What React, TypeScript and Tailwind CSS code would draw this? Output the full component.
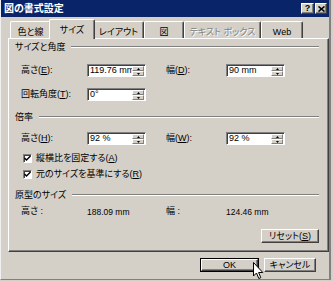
import React from "react";

const raised =
  "bg-[#d4d0c8] border border-t-white border-l-white border-r-[#404040] border-b-[#404040] shadow-[inset_-1px_-1px_0_#808080]";

const spinHalf =
  "h-[5px] bg-[#d4d0c8] border border-t-white border-l-white border-r-[#808080] border-b-[#808080] flex items-center justify-center";

function U({ c }: { c: string }) {
  return <span className="underline underline-offset-[1px]">{c}</span>;
}

function Groove({ title }: { title: string }) {
  return (
    <div className="flex items-center h-[12px]">
      <span className="leading-[12px] whitespace-nowrap">{title}</span>
      <div className="flex-1 ml-[6px] h-[2px] border-t border-t-[#808080] border-b border-b-white" />
    </div>
  );
}

function Spin({ value }: { value: string }) {
  return (
    <div className="w-[59px] h-[13px] bg-white border border-t-[#808080] border-l-[#808080] border-r-white border-b-white shadow-[inset_1px_1px_0_#404040] flex">
      <span className="flex-1 pl-[2px] text-[9px] leading-[11px] overflow-hidden whitespace-nowrap">
        {value}
      </span>
      <div className="w-[12px] flex flex-col mt-[1px] mr-[1px]">
        <div className={spinHalf}>
          <svg width="3" height="2" viewBox="0 0 3 2">
            <path d="M1.5 0 L3 2 L0 2 Z" fill="#000" />
          </svg>
        </div>
        <div className={spinHalf}>
          <svg width="3" height="2" viewBox="0 0 3 2">
            <path d="M0 0 L3 0 L1.5 2 Z" fill="#000" />
          </svg>
        </div>
      </div>
    </div>
  );
}

function Check({ children }: { children: React.ReactNode }) {
  return (
    <div className="flex items-center h-[12px] pl-[8px]">
      <div className="w-[9px] h-[9px] bg-white border border-t-[#808080] border-l-[#808080] border-r-white border-b-white shadow-[inset_1px_1px_0_#404040] flex items-center justify-center">
        <svg width="7" height="7" viewBox="0 0 7 7">
          <path d="M0.5 3 L2.5 5 L6.5 1" stroke="#000" strokeWidth="1.4" fill="none" />
        </svg>
      </div>
      <span className="ml-[4px] leading-[12px] whitespace-nowrap">{children}</span>
    </div>
  );
}

function Tab({
  label,
  w,
  selected,
  disabled,
}: {
  label: string;
  w: string;
  selected?: boolean;
  disabled?: boolean;
}) {
  if (selected) {
    return (
      <div
        className={
          "relative z-10 -mx-[2px] -mb-[1px] h-[20px] bg-[#d4d0c8] border-t border-l border-t-white border-l-white border-r border-r-[#404040] shadow-[inset_-1px_0_0_#808080] rounded-t-[2px] flex justify-center pt-[4px] " +
          w
        }
      >
        <span className="leading-[12px] whitespace-nowrap">{label}</span>
      </div>
    );
  }
  return (
    <div
      className={
        "h-[17px] bg-[#d4d0c8] border-t border-l border-t-white border-l-white border-r border-r-[#404040] shadow-[inset_-1px_0_0_#808080] rounded-t-[2px] flex justify-center pt-[4px] " +
        w
      }
    >
      <span
        className={
          "leading-[12px] whitespace-nowrap " +
          (disabled ? "text-[#808080] [text-shadow:1px_1px_0_#ffffff]" : "")
        }
      >
        {label}
      </span>
    </div>
  );
}

export default function App() {
  return (
    <div className="relative w-[333px] h-[281px] overflow-hidden bg-[#d4d0c8] text-black text-[9px] font-['Liberation_Sans','Noto_Sans_CJK_JP',sans-serif] [font-feature-settings:'palt']">
      <div className="w-[331px] h-[280px] border-l border-l-[#f0f0f0] border-r-2 border-r-[#808080] border-b border-b-[#808080] flex flex-col">
        {/* title bar */}
        <div className="w-[328px] h-[17px] bg-[#0a246a] flex items-center pl-[3px] pr-[2px]">
          <span className="text-white font-bold text-[10px] leading-[12px] flex-1 whitespace-nowrap">
            図の書式設定
          </span>
          <div className="flex gap-[1px]">
            <div className={"w-[13px] h-[11px] flex items-center justify-center " + raised}>
              <span className="font-bold text-[9px] leading-[9px] font-['Liberation_Sans',sans-serif]">?</span>
            </div>
            <div className={"w-[12px] h-[11px] flex items-center justify-center " + raised}>
              <svg width="7" height="6" viewBox="0 0 7 6">
                <path d="M0.5 0.5 L6.5 5.5 M6.5 0.5 L0.5 5.5" stroke="#000" strokeWidth="1.6" />
              </svg>
            </div>
          </div>
        </div>

        {/* tabs */}
        <div className="pt-[2px]">
          <div className="flex items-end h-[19px] ml-[9px]">
            <Tab label="色と線" w="w-[41px]" />
            <Tab label="サイズ" w="w-[46px]" selected />
            <Tab label="レイアウト" w="w-[51px]" />
            <Tab label="図" w="w-[40px]" />
            <Tab label="テキスト ボックス" w="w-[77px]" disabled />
            <Tab label="Web" w="w-[42px]" />
          </div>

          {/* panel */}
          <div className="ml-[7px] w-[321px] h-[214px] border-t border-l border-t-white border-l-white border-r border-b border-r-[#404040] border-b-[#404040] shadow-[inset_-1px_-1px_0_#808080] pl-[6px] pr-[9px] pt-[2px] flex flex-col">
            <Groove title="サイズと角度" />

            <div className="flex items-center h-[13px] mt-[11px] pl-[6px]">
              <span className="w-[66px] whitespace-nowrap">
                高さ(<U c="E" />):
              </span>
              <Spin value="119.76 mm" />
              <span className="w-[20px]" />
              <span className="w-[60px] whitespace-nowrap">
                幅(<U c="D" />):
              </span>
              <Spin value="90 mm" />
            </div>

            <div className="flex items-center h-[13px] mt-[11px] pl-[6px]">
              <span className="w-[66px] whitespace-nowrap">
                回転角度(<U c="T" />):
              </span>
              <Spin value="0°" />
            </div>

            <div className="mt-[10px]">
              <Groove title="倍率" />
            </div>

            <div className="flex items-center h-[13px] mt-[9px] pl-[6px]">
              <span className="w-[66px] whitespace-nowrap">
                高さ(<U c="H" />):
              </span>
              <Spin value="92 %" />
              <span className="w-[20px]" />
              <span className="w-[60px] whitespace-nowrap">
                幅(<U c="W" />):
              </span>
              <Spin value="92 %" />
            </div>

            <div className="mt-[7px]">
              <Check>
                縦横比を固定する(<U c="A" />)
              </Check>
            </div>
            <div className="mt-[4px]">
              <Check>
                元のサイズを基準にする(<U c="R" />)
              </Check>
            </div>

            <div className="mt-[9px]">
              <Groove title="原型のサイズ" />
            </div>

            <div className="flex items-center h-[12px] mt-[5px] pl-[6px]">
              <span className="w-[66px] whitespace-nowrap">高さ :</span>
              <span className="w-[59px] text-[8.5px] whitespace-nowrap">188.09 mm</span>
              <span className="w-[20px]" />
              <span className="w-[60px] whitespace-nowrap">幅 :</span>
              <span className="text-[8.5px] whitespace-nowrap">124.46 mm</span>
            </div>

            <div className="flex justify-end mt-[11px]">
              <div className={"w-[58px] h-[14px] flex items-center justify-center " + raised}>
                <span className="leading-[12px]">
                  リセット(<U c="S" />)
                </span>
              </div>
            </div>
          </div>

          {/* bottom buttons */}
          <div className="flex justify-end gap-[5px] mt-[6px] pr-[13px]">
            <div className="w-[59px] h-[14px] border border-black flex">
              <div className={"flex-1 flex items-center justify-center " + raised}>
                <span className="leading-[10px] text-[9px]">OK</span>
              </div>
            </div>
            <div className={"w-[52px] h-[14px] flex items-center justify-center " + raised}>
              <span className="leading-[12px]">キャンセル</span>
            </div>
          </div>
        </div>
      </div>

      {/* mouse cursor */}
      <svg
        className="absolute left-[253px] top-[262px]"
        width="11"
        height="18"
        viewBox="0 0 11 18"
      >
        <path
          d="M0.5 0.5 L0.5 14 L3.5 11 L5.8 16.5 L7.8 15.7 L5.6 10.5 L9.8 10.5 Z"
          fill="#ffffff"
          stroke="#000000"
          strokeWidth="1"
          strokeLinejoin="miter"
        />
      </svg>
    </div>
  );
}
